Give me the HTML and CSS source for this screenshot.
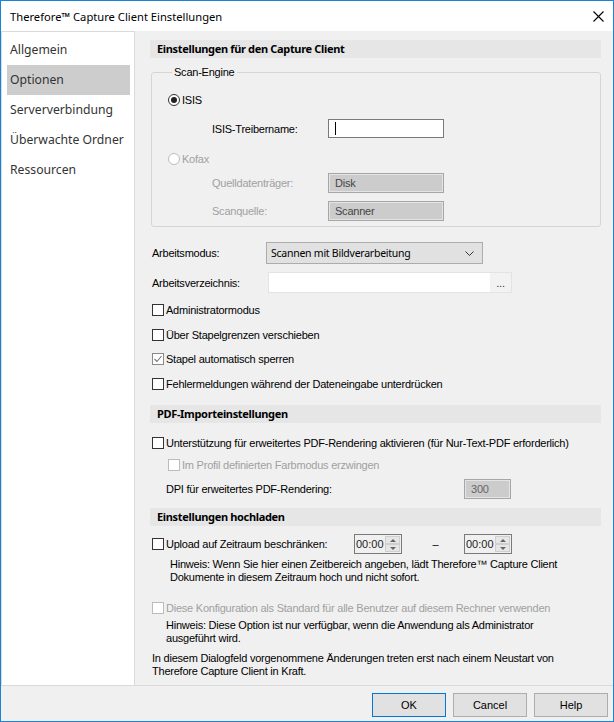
FILE: index.html
```html
<!DOCTYPE html>
<html lang="de">
<head>
    <meta charset="UTF-8">
    <title>Therefore™ Capture Client Einstellungen</title>
    <link rel="stylesheet" href="styles.css">
</head>
<body>
<div class="window">
    <div class="titlebar">
        <span class="title">Therefore™ Capture Client Einstellungen</span>
        <svg class="close" width="11" height="11" viewBox="0 0 11 11"><path d="M0.5 0.5 L10.5 10.5 M10.5 0.5 L0.5 10.5" stroke="#000" stroke-width="1.1" fill="none"/></svg>
    </div>

    <div class="body">
        <ul class="nav">
            <li>Allgemein</li>
            <li class="active">Optionen</li>
            <li>Serververbindung</li>
            <li>Überwachte Ordner</li>
            <li>Ressourcen</li>
        </ul>

        <div class="main">
            <div class="group-head">Einstellungen für den Capture Client</div>

            <fieldset class="engine">
                <legend>Scan-Engine</legend>
                <div class="radio-row isis"><span class="radio checked"></span>ISIS</div>
                <div class="field-row driver">
                    <span class="field-label">ISIS-Treibername:</span>
                    <span class="input white"><span class="caret"></span></span>
                </div>
                <div class="radio-row kofax disabled"><span class="radio"></span>Kofax</div>
                <div class="field-row source disabled">
                    <span class="field-label">Quelldatenträger:</span>
                    <span class="input gray">Disk</span>
                </div>
                <div class="field-row scanner disabled">
                    <span class="field-label">Scanquelle:</span>
                    <span class="input gray">Scanner</span>
                </div>
            </fieldset>

            <div class="mode-row">
                <span class="mode-label">Arbeitsmodus:</span>
                <span class="select">Scannen mit Bildverarbeitung
                    <svg class="chevron" width="9" height="5" viewBox="0 0 9 5"><path d="M0.5 0.5 L4.5 4.5 L8.5 0.5" stroke="#333" fill="none"/></svg>
                </span>
            </div>
            <div class="dir-row">
                <span class="mode-label">Arbeitsverzeichnis:</span>
                <span class="dir-input"><span class="browse">...</span></span>
            </div>

            <div class="check-row c1"><span class="check"></span>Administratormodus</div>
            <div class="check-row c2"><span class="check"></span>Über Stapelgrenzen verschieben</div>
            <div class="check-row c3"><span class="check light"><svg width="10" height="10" viewBox="0 0 10 10"><path d="M1.5 5 L4 7.5 L8.5 2" stroke="#777" stroke-width="1.1" fill="none"/></svg></span>Stapel automatisch sperren</div>
            <div class="check-row c4"><span class="check"></span>Fehlermeldungen während der Dateneingabe unterdrücken</div>

            <div class="group-head pdf-head">PDF-Importeinstellungen</div>
            <div class="check-row p1"><span class="check"></span>Unterstützung für erweitertes PDF-Rendering aktivieren (für Nur-Text-PDF erforderlich)</div>
            <div class="check-row p2 sub disabled"><span class="check"></span>Im Profil definierten Farbmodus erzwingen</div>
            <div class="dpi-row">
                <span>DPI für erweitertes PDF-Rendering:</span>
                <span class="input gray dpi">300</span>
            </div>

            <div class="group-head upload-head">Einstellungen hochladen</div>
            <div class="upload-row">
                <span class="check"></span>
                <span class="upload-label">Upload auf Zeitraum beschränken:</span>
                <span class="spin"><span class="spin-val">00:00</span><span class="spin-btns"><span class="up"></span><span class="dn"></span></span></span>
                <span class="dash">–</span>
                <span class="spin"><span class="spin-val">00:00</span><span class="spin-btns"><span class="up"></span><span class="dn"></span></span></span>
            </div>
            <p class="note upload-note">Hinweis: Wenn Sie hier einen Zeitbereich angeben, lädt Therefore™ Capture Client<br>Dokumente in diesem Zeitraum hoch und nicht sofort.</p>

            <div class="check-row d1 disabled"><span class="check"></span>Diese Konfiguration als Standard für alle Benutzer auf diesem Rechner verwenden</div>
            <p class="note admin-note">Hinweis: Diese Option ist nur verfügbar, wenn die Anwendung als Administrator<br>ausgeführt wird.</p>
            <p class="note restart-note">In diesem Dialogfeld vorgenommene Änderungen treten erst nach einem Neustart von<br>Therefore Capture Client in Kraft.</p>
        </div>
    </div>

    <div class="footer">
        <button class="btn default">OK</button>
        <button class="btn">Cancel</button>
        <button class="btn">Help</button>
    </div>
</div>
</body>
</html>
```

FILE: styles.css
```css
* {
    box-sizing: border-box;
}
html, body {
    margin: 0;
    padding: 0;
}
body {
    width: 614px;
    height: 722px;
    overflow: hidden;
    font-family: "Liberation Sans", Arial, sans-serif;
    font-size: 11px;
    letter-spacing: -0.23px;
    color: #000;
}
.window {
    width: 614px;
    height: 722px;
    border: 1px solid #1883d7;
    background: #f0f0f0;
    display: flex;
    flex-direction: column;
}
.titlebar {
    height: 30px;
    flex: none;
    background: #fff;
    display: flex;
    align-items: center;
    justify-content: space-between;
    padding: 0 9px 0 9px;
    font-family: "Noto Sans", sans-serif;
    font-size: 11.2px;
    letter-spacing: 0;
}
.close {
    display: block;
}
.body {
    height: 655px;
    flex: none;
    display: flex;
    border-bottom: 1px solid #dadada;
}
.nav {
    width: 134px;
    flex: none;
    margin: 0;
    padding: 3px 4px 0 5px;
    list-style: none;
    background: #fff;
    border: 1px solid #dadada;
    border-bottom: none;
    font-family: "Noto Sans", sans-serif;
    font-size: 12.2px;
    letter-spacing: 0;
    color: #333;
}
.nav li {
    height: 30px;
    line-height: 30px;
    padding-left: 3px;
    white-space: nowrap;
}
.nav li.active {
    background: #cdcdcd;
}
.main {
    flex: 1;
    padding: 9px 12px 0 15px;
    white-space: nowrap;
}
.group-head {
    height: 18px;
    line-height: 18px;
    background: #e6e6e6;
    padding-left: 7px;
    font-family: "Noto Sans", sans-serif;
    font-weight: bold;
    font-size: 11px;
    letter-spacing: -0.33px;
}
.engine {
    margin: 7px 0 0 1px;
    padding: 11px 0 5px 16px;
    border: 1px solid #d5d5d5;
    border-radius: 3px;
}
.engine legend {
    line-height: 14px;
    padding: 0 3px 0 2px;
    margin-left: 4px;
}
.radio-row {
    height: 20px;
    display: flex;
    align-items: center;
}
.radio {
    width: 12px;
    height: 12px;
    border: 1px solid #333;
    border-radius: 50%;
    background: #fff;
    margin-right: 2px;
    display: flex;
    align-items: center;
    justify-content: center;
}
.radio.checked::after {
    content: "";
    width: 6px;
    height: 6px;
    border-radius: 50%;
    background: #222;
}
.disabled {
    color: #a0a0a0;
}
.disabled .radio,
.disabled .check {
    border-color: #bcbcbc;
}
.field-row {
    display: flex;
    align-items: center;
    padding-left: 44px;
}
.field-label {
    width: 116px;
}
.input {
    width: 116px;
    height: 20px;
    display: flex;
    align-items: center;
    padding-left: 6px;
}
.input.white {
    background: #fff;
    border: 1px solid #7a7a7a;
}
.input.gray {
    background: #cccccc;
    border: 1px solid #a6a6a6;
    box-shadow: inset 0 0 0 1px #e4e4e4;
    color: #444;
}
.caret {
    width: 1px;
    height: 13px;
    background: #000;
}
.driver {
    margin-top: 9px;
}
.driver .input {
    height: 19px;
}
.kofax {
    margin-top: 11px;
}
.source {
    margin-top: 4px;
}
.scanner {
    margin-top: 8px;
}
.mode-row,
.dir-row {
    display: flex;
    align-items: center;
    padding-left: 2px;
}
.mode-row {
    margin-top: 15px;
}
.dir-row {
    margin-top: 8px;
}
.mode-label {
    width: 114px;
}
.select {
    width: 217px;
    height: 22px;
    display: flex;
    align-items: center;
    justify-content: space-between;
    padding: 0 8px 0 4px;
    background: #e1e1e1;
    border: 1px solid #acacac;
    font-family: "Noto Sans", sans-serif;
    font-size: 10.5px;
    letter-spacing: -0.25px;
}
.chevron {
    display: block;
}
.dir-input {
    width: 244px;
    height: 21px;
    margin-left: 2px;
    background: #fff;
    border: 1px solid #e3e3e3;
    display: flex;
    justify-content: flex-end;
}
.browse {
    width: 21px;
    background: #f2f2f2;
    text-align: center;
    line-height: 20px;
    color: #333;
}
.check-row {
    height: 20px;
    display: flex;
    align-items: center;
    padding-left: 2px;
}
.check {
    width: 12px;
    height: 12px;
    flex: none;
    border: 1px solid #333;
    background: #fff;
    margin-right: 2px;
    display: flex;
    align-items: center;
    justify-content: center;
}
.check.light {
    border-color: #8a8a8a;
}
.check svg {
    display: block;
}
.c1 { margin-top: 7px; }
.c2 { margin-top: 5px; }
.c3 { margin-top: 4px; }
.c4 { margin-top: 5px; }
.pdf-head {
    margin-top: 11px;
}
.p1 { margin-top: 10px; }
.p2 {
    margin-top: 2px;
    padding-left: 18px;
}
.dpi-row {
    margin-top: 4px;
    display: flex;
    align-items: center;
    padding-left: 16px;
}
.dpi-row span:first-child {
    width: 298px;
}
.input.dpi {
    width: 47px;
    color: #666;
}
.upload-head {
    margin-top: 9px;
}
.upload-row {
    margin-top: 8px;
    height: 20px;
    display: flex;
    align-items: center;
    padding-left: 2px;
}
.upload-label {
    width: 188px;
}
.spin {
    width: 48px;
    height: 20px;
    border: 1px solid #7a7a7a;
    background: #f0f0f0;
    display: flex;
}
.spin-val {
    flex: 1;
    padding-left: 1px;
    line-height: 18px;
    letter-spacing: 0;
    color: #222;
}
.spin-btns {
    width: 17px;
    display: flex;
    flex-direction: column;
    padding: 1px;
}
.spin-btns span {
    flex: 1;
    background: #e6e6e6;
    border: 1px solid #cfcfcf;
    display: flex;
    align-items: center;
    justify-content: center;
}
.spin-btns .up::after {
    content: "";
    border-left: 3px solid transparent;
    border-right: 3px solid transparent;
    border-bottom: 3px solid #666;
}
.spin-btns .dn::after {
    content: "";
    border-left: 3px solid transparent;
    border-right: 3px solid transparent;
    border-top: 3px solid #666;
}
.dash {
    width: 62px;
    padding-left: 5px;
    text-align: center;
}
.note {
    margin: 0;
    line-height: 12.5px;
}
.upload-note {
    margin-top: 4px;
    padding-left: 20px;
}
.d1 {
    margin-top: 15px;
}
.admin-note {
    margin-top: 1px;
    padding-left: 16px;
}
.restart-note {
    margin-top: 8px;
    padding-left: 2px;
}
.footer {
    flex: 1;
    display: flex;
    justify-content: flex-end;
    gap: 7px;
    padding: 7px 5px 0 0;
}
.btn {
    width: 74px;
    height: 24px;
    margin: 0;
    padding: 0;
    background: #e1e1e1;
    border: 1px solid #adadad;
    font-family: "Liberation Sans", Arial, sans-serif;
    font-size: 11px;
    color: #000;
}
.btn.default {
    border-color: #0078d7;
}
```
